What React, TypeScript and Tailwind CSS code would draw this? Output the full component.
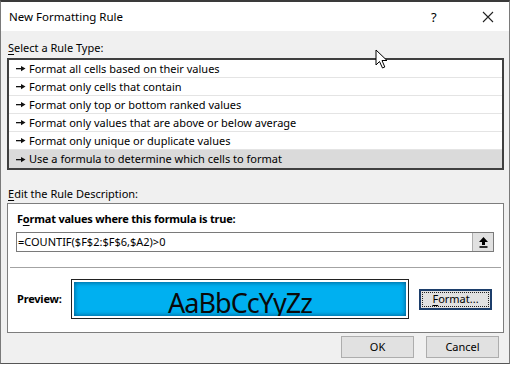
import React from "react";

const RULE_TYPES = [
  "Format all cells based on their values",
  "Format only cells that contain",
  "Format only top or bottom ranked values",
  "Format only values that are above or below average",
  "Format only unique or duplicate values",
  "Use a formula to determine which cells to format",
];

function Bullet() {
  return (
    <svg width="10" height="7" viewBox="0 0 10 7" className="shrink-0">
      <rect x="0" y="3" width="7" height="1.3" fill="#111" />
      <polygon points="5,1 9.5,3.6 5,6.2" fill="#111" />
    </svg>
  );
}

function Cursor() {
  return (
    <svg
      width="14"
      height="21"
      viewBox="0 0 14 21"
      className="absolute left-[375px] top-[49px]"
    >
      <path
        d="M1 1 L1 16 L4.5 12.5 L7.5 19 L9.8 18 L7 11.5 L12 11.5 Z"
        fill="#fff"
        stroke="#000"
        strokeWidth="1"
        strokeLinejoin="round"
      />
    </svg>
  );
}

export default function App() {
  return (
    <div className="relative w-[512px] h-[366px] overflow-hidden bg-white text-black font-['Noto_Sans','Open_Sans',sans-serif] text-[11px] leading-[16px]">
      <div className="flex flex-col w-[510px] h-[364px] border-t-2 border-x border-b border-t-[#3a3a3a] border-x-[#7a7a7a] border-b-[#555]">
        {/* title bar */}
        <div className="h-[29px] bg-white flex items-center pl-[8px] pr-[15px] shrink-0">
          <span className="flex-1 text-[11.5px]">New Formatting Rule</span>
          <span className="w-[10px] text-[13px] mr-[41px]">?</span>
          <svg width="12" height="12" viewBox="0 0 12 12">
            <path d="M1 1 L11 11 M11 1 L1 11" stroke="#222" strokeWidth="1.1" />
          </svg>
        </div>

        {/* body */}
        <div className="flex-1 flex flex-col bg-[#f0f0f0] px-[6px] pt-[9px]">
          <div className="pl-[1px]">
            <span className="underline underline-offset-2">S</span>elect a Rule Type:
          </div>
          <div className="mt-[2px] bg-white border-2 border-[#3f3f3f] flex flex-col w-[497px]">
            {RULE_TYPES.map((r, i) => (
              <div
                key={r}
                className={`h-[18px] flex items-center gap-[3px] pl-[7px] ${
                  i === RULE_TYPES.length - 1
                    ? "bg-[#dadada]"
                    : "border-b border-[#e4e4e4]"
                }`}
              >
                <Bullet />
                <span>{r}</span>
              </div>
            ))}
          </div>

          <div className="mt-[16px] pl-[1px]">
            <span className="underline underline-offset-2">E</span>dit the Rule Description:
          </div>
          <div className="mt-[1px] w-[497px] h-[130px] bg-white border border-[#7d7d7d] flex flex-col px-[8px] pt-[7px]">
            <div className="font-bold pl-[1px] tracking-[-0.2px]">
              F<span className="underline underline-offset-2">o</span>rmat values where this formula is true:
            </div>
            <div className="mt-[5px] w-[478px] h-[20px] border border-[#7a7a7a] flex items-center">
              <span className="flex-1 pl-[1px]">=COUNTIF($F$2:$F$6,$A2)&gt;0</span>
              <div className="w-[21px] h-full bg-[#e1e1e1] border-l border-[#adadad] flex items-center justify-center">
                <svg width="9" height="11" viewBox="0 0 9 11">
                  <polygon points="4.5,0 9,5 6,5 6,8 3,8 3,5 0,5" fill="#000" />
                  <rect x="0.5" y="9.2" width="8" height="1.6" fill="#000" />
                </svg>
              </div>
            </div>
            <div className="mt-[15px] -mx-[6px] h-px bg-[#a3a3a3]" />
            <div className="flex-1 flex items-center pb-[2px]">
              <span className="font-bold w-[55px] pl-[1px] tracking-[-0.2px]">Preview:</span>
              <div className="w-[338px] h-[40px] border border-[#222] p-[2px] bg-white">
                <div className="w-full h-full bg-[#00b0f0] shadow-[inset_0_0_5px_rgba(0,40,80,0.75)] flex items-end justify-center overflow-hidden">
                  <span className="font-['Noto_Sans',sans-serif] text-[27px] leading-[27px] text-[#0a0a0a] tracking-[-1px]">
                    AaBbCcYyZz
                  </span>
                </div>
              </div>
              <div className="ml-[10px] w-[73px] h-[21px] border-2 border-[#1c3e6b] bg-[#e1e1e1] p-[1px]">
                <div className="w-full h-full border border-dotted border-[#222] flex items-center justify-center">
                  <span>
                    <span className="underline underline-offset-2">F</span>ormat...
                  </span>
                </div>
              </div>
            </div>
          </div>

          <div className="mt-[3px] flex justify-end gap-[12px] pr-[4px]">
            <button className="w-[73px] h-[22px] bg-[#e1e1e1] border border-[#adadad]">OK</button>
            <button className="w-[73px] h-[22px] bg-[#e1e1e1] border border-[#adadad]">Cancel</button>
          </div>
          <div className="flex-1" />
        </div>
      </div>
      <Cursor />
    </div>
  );
}
